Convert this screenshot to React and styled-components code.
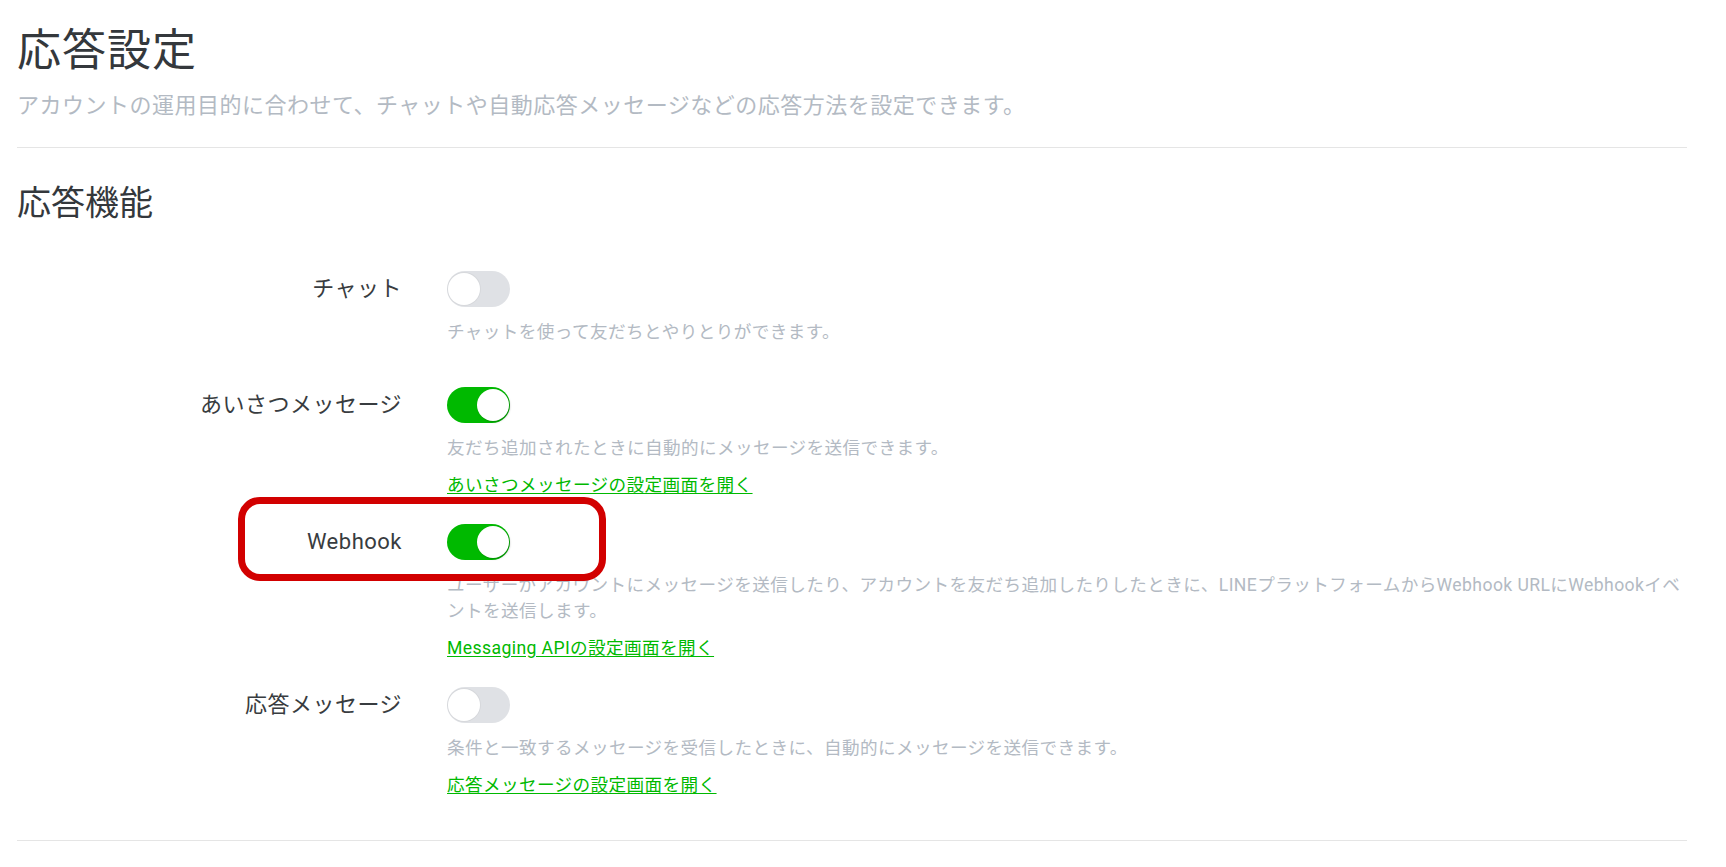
import React from "react";
import styled, { createGlobalStyle } from "styled-components";

const GlobalStyle = createGlobalStyle`
  body {
    margin: 0;
    background: #fff;
    font-family: Roboto, "Noto Sans CJK JP", sans-serif;
    color: #383c40;
  }
`;

const Page = styled.div`
  padding: 25px 39px 0 17px;
`;

const Header = styled.header`
  border-bottom: 1px solid #e5e5e5;
  padding-bottom: 25px;
`;

const Title = styled.h1`
  margin: 0;
  font-size: 44px;
  font-weight: 400;
  line-height: 52px;
  letter-spacing: 1px;
  color: #34383c;
`;

const Lead = styled.p`
  margin: 12px 0 0;
  font-size: 22px;
  line-height: 33px;
  letter-spacing: 0.5px;
  color: #b3bac3;
`;

const Section = styled.section`
  border-bottom: 1px solid #e5e5e5;
  padding-bottom: 42px;
`;

const SectionTitle = styled.h2`
  margin: 34px 0 0;
  font-size: 34px;
  font-weight: 400;
  line-height: 42px;
  color: #34383c;
`;

const Rows = styled.div`
  margin-top: 47px;
  display: flex;
  flex-direction: column;
  gap: 26px;
`;

const Row = styled.div`
  position: relative;
  display: grid;
  grid-template-columns: 385px 1fr;
  column-gap: 45px;
`;

const Label = styled.div`
  text-align: right;
  font-size: 22px;
  line-height: 36px;
  letter-spacing: 0.5px;
  color: #383c40;
`;

const Body = styled.div`
  display: flex;
  flex-direction: column;
  align-items: flex-start;
`;

const Track = styled.span`
  position: relative;
  display: block;
  width: 63px;
  height: 36px;
  border-radius: 18px;
  background: ${(p) => (p.$on ? "#00b900" : "#dfe1e5")};
`;

const Knob = styled.span`
  position: absolute;
  top: 2px;
  left: ${(p) => (p.$on ? "30px" : "1px")};
  width: 32px;
  height: 32px;
  border-radius: 50%;
  background: #fff;
  box-shadow: ${(p) =>
    p.$on ? "1px 1px 2px rgba(0, 0, 0, 0.25)" : "0 0 0 1px rgba(0, 0, 0, 0.04)"};
`;

const Desc = styled.p`
  margin: 12px 0 ${(p) => (p.$tail ? "16px" : "0")};
  font-size: 17.6px;
  line-height: 26px;
  letter-spacing: 0.4px;
  color: #b3bac3;
  max-width: 1240px;
`;

const Link = styled.a`
  margin-top: 11px;
  font-size: 17.6px;
  line-height: 26px;
  letter-spacing: 0.4px;
  color: #00b900;
  text-decoration: underline;
  text-underline-offset: 2px;
`;

const Marker = styled.div`
  position: absolute;
  top: -27px;
  left: 221px;
  width: 368px;
  height: 84px;
  box-sizing: border-box;
  border: 7px solid #d20000;
  border-radius: 22px;
  pointer-events: none;
`;

function Toggle({ on }) {
  return (
    <Track $on={on}>
      <Knob $on={on} />
    </Track>
  );
}

const features = [
  {
    label: "チャット",
    on: false,
    desc: "チャットを使って友だちとやりとりができます。",
  },
  {
    label: "あいさつメッセージ",
    on: true,
    desc: "友だち追加されたときに自動的にメッセージを送信できます。",
    link: "あいさつメッセージの設定画面を開く",
  },
  {
    label: "Webhook",
    on: true,
    desc:
      "ユーザーがアカウントにメッセージを送信したり、アカウントを友だち追加したりしたときに、LINEプラットフォームからWebhook URLにWebhookイベントを送信します。",
    link: "Messaging APIの設定画面を開く",
    marked: true,
  },
  {
    label: "応答メッセージ",
    on: false,
    desc: "条件と一致するメッセージを受信したときに、自動的にメッセージを送信できます。",
    link: "応答メッセージの設定画面を開く",
  },
];

export default function App() {
  return (
    <Page>
      <GlobalStyle />
      <Header>
        <Title>応答設定</Title>
        <Lead>
          アカウントの運用目的に合わせて、チャットや自動応答メッセージなどの応答方法を設定できます。
        </Lead>
      </Header>
      <Section>
        <SectionTitle>応答機能</SectionTitle>
        <Rows>
          {features.map((f) => (
            <Row key={f.label}>
              <Label>{f.label}</Label>
              <Body>
                <Toggle on={f.on} />
                <Desc $tail={!f.link}>{f.desc}</Desc>
                {f.link && <Link href="#">{f.link}</Link>}
              </Body>
              {f.marked && <Marker />}
            </Row>
          ))}
        </Rows>
      </Section>
    </Page>
  );
}
